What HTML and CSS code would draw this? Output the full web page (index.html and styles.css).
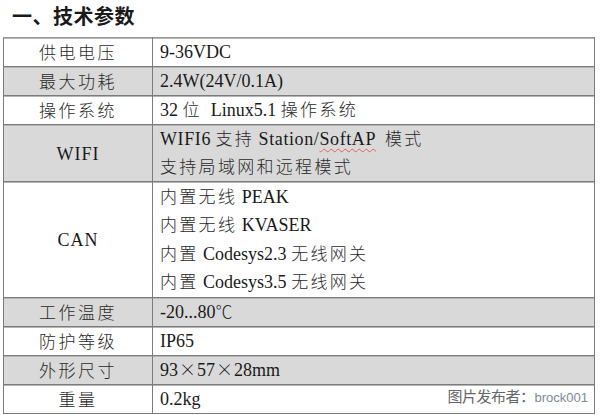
FILE: index.html
```html
<!DOCTYPE html>
<html lang="zh-CN">
<head>
<meta charset="utf-8">
<link rel="stylesheet" href="styles.css">
</head>
<body>
<div class="page">
  <h1 class="title">一、技术参数</h1>
  <div class="wrap">
    <table class="spec">
      <colgroup><col class="c1"><col class="c2"></colgroup>
      <tr><td class="k">供电电压</td><td class="v">9-36VDC</td></tr>
      <tr class="alt"><td class="k">最大功耗</td><td class="v">2.4W(24V/0.1A)</td></tr>
      <tr><td class="k">操作系统</td><td class="v">32 <span class="zh">位</span>&nbsp; Linux5.1 <span class="zh">操作系统</span></td></tr>
      <tr class="alt"><td class="k"><span class="lat">WIFI</span></td><td class="v"><span class="wide">WIFI6</span> <span class="zh">支持</span> <span class="wide">Station/<span class="sp">SoftAP</span></span>&nbsp; <span class="zh">模式</span><br><span class="zh">支持局域网和远程模式</span></td></tr>
      <tr class="tall"><td class="k"><span class="lat">CAN</span></td><td class="v"><span class="zh">内置无线</span> PEAK<br><span class="zh">内置无线</span> KVASER<br><span class="zh">内置</span> Codesys2.3 <span class="zh">无线网关</span><br><span class="zh">内置</span> Codesys3.5 <span class="zh">无线网关</span></td></tr>
      <tr class="alt"><td class="k">工作温度</td><td class="v">-20...80<span class="zh deg">℃</span></td></tr>
      <tr><td class="k">防护等级</td><td class="v">IP65</td></tr>
      <tr class="alt"><td class="k">外形尺寸</td><td class="v">93<span class="x">×</span>57<span class="x">×</span>28mm</td></tr>
      <tr><td class="k">重量</td><td class="v">0.2kg</td></tr>
    </table>
    <div class="mark"><span class="mk-zh">图片发布者：</span><span class="mk-en">brock001</span></div>
  </div>
</div>
</body>
</html>
```
FILE: styles.css
```css
html, body {
  margin: 0;
  padding: 0;
  background: #ffffff;
}
.page {
  width: 600px;
  height: 415px;
  overflow: hidden;
}
.title {
  margin: 0 0 5px 12px;
  font-family: "Noto Sans CJK SC", sans-serif;
  font-size: 20px;
  line-height: 32px;
  font-weight: 700;
  letter-spacing: 0.5px;
  color: #1a1a1a;
}
.wrap {
  position: relative;
  margin-left: 3px;
  width: 591px;
}
.spec {
  width: 591px;
  border-collapse: collapse;
  table-layout: fixed;
  font-family: "Liberation Serif", serif;
  font-size: 18px;
  color: #1a1a1a;
}
.c1 { width: 149px; }
.c2 { width: 442px; }
.spec td {
  border: 1px solid #7c7c7c;
  box-shadow: inset 0 1px 0 #b5b5b5;
  padding: 0;
  height: 28px;
  line-height: 28px;
  vertical-align: middle;
}
.spec tr:first-child td {
  border-top: 1px solid #9a9a9a;
}
.spec tr.alt td {
  background: #d9d9d9;
}
.spec tr.tall td {
  padding: 1px 0;
  line-height: 28.25px;
}
.k {
  text-align: center;
  font-family: "Noto Sans CJK SC", sans-serif;
  font-size: 17px;
  font-weight: 300;
  letter-spacing: 2.5px;
  color: #2a2a2a;
}
.k .lat {
  font-family: "Liberation Serif", serif;
  font-size: 18px;
  font-weight: 400;
  letter-spacing: 1px;
  line-height: 1;
  color: #1a1a1a;
}
.v {
  padding-left: 7px !important;
  text-align: left;
}
.wide {
  letter-spacing: 0.6px;
}
.zh {
  font-family: "Noto Sans CJK SC", sans-serif;
  font-size: 17px;
  font-weight: 300;
  line-height: 1;
  letter-spacing: 2.3px;
  color: #2a2a2a;
}
.deg {
  letter-spacing: 0;
}
.x {
  font-family: "Noto Sans CJK SC", sans-serif;
  font-size: 17px;
  font-weight: 300;
  line-height: 1;
  margin: 0 1px;
}
.sp {
  text-decoration: underline wavy #e06060;
  text-decoration-thickness: 1px;
  text-underline-offset: 3px;
}
.mark {
  position: absolute;
  right: 6px;
  bottom: 6px;
  background: #ffffff;
  line-height: 20px;
  padding-left: 2px;
}
.mk-zh {
  font-family: "Noto Sans CJK SC", sans-serif;
  font-size: 15px;
  color: #666666;
  letter-spacing: -0.5px;
}
.mk-en {
  font-family: "Liberation Sans", sans-serif;
  font-size: 13px;
  color: #7d8a98;
}
```
